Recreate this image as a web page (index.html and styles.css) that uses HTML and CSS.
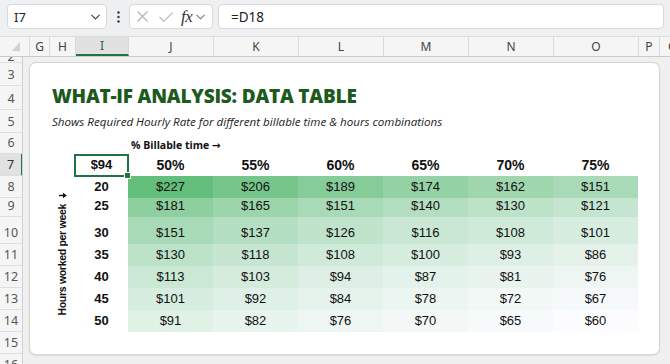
FILE: index.html
```html
<!DOCTYPE html>
<html>
<head>
<meta charset="utf-8">
<link rel="stylesheet" href="styles.css">
</head>
<body>
<div class="app">
  <div class="toolbar">
    <div class="namebox">
      <span class="nb-text">I7</span>
      <svg class="chev" width="9" height="6" viewBox="0 0 9 6"><polyline points="0.5,0.8 4.5,4.8 8.5,0.8" fill="none" stroke="#444" stroke-width="1.2"/></svg>
    </div>
    <div class="kebab">
      <svg width="3" height="12" viewBox="0 0 3 12"><circle cx="1.5" cy="1.5" r="1.2" fill="#333"/><circle cx="1.5" cy="6" r="1.2" fill="#333"/><circle cx="1.5" cy="10.5" r="1.2" fill="#333"/></svg>
    </div>
    <div class="fxbox">
      <svg class="ico-x" width="11" height="11" viewBox="0 0 11 11"><path d="M0.5 0.5 L10.5 10.5 M10.5 0.5 L0.5 10.5" stroke="#b3b3b3" stroke-width="1.1" fill="none"/></svg>
      <svg class="ico-ok" width="14" height="10" viewBox="0 0 14 10"><polyline points="0.5,5 4.8,9.3 13.5,0.6" fill="none" stroke="#b3b3b3" stroke-width="1.1"/></svg>
      <span class="fx">fx</span>
      <svg class="chev2" width="9" height="6" viewBox="0 0 9 6"><polyline points="0.5,0.8 4.5,4.8 8.5,0.8" fill="none" stroke="#777" stroke-width="1.1"/></svg>
    </div>
    <div class="formula">=D18</div>
  </div>

  <div class="colheads">
    <div class="corner"><svg width="8" height="9" viewBox="0 0 8 9"><polygon points="8,0 8,9 0,9" fill="#d0d0d0"/></svg></div>
    <div class="ch c-g">G</div>
    <div class="ch c-h">H</div>
    <div class="ch c-i sel">I</div>
    <div class="ch c-w">J</div>
    <div class="ch c-w">K</div>
    <div class="ch c-w">L</div>
    <div class="ch c-w">M</div>
    <div class="ch c-w">N</div>
    <div class="ch c-w">O</div>
    <div class="ch c-p">P</div>
    <div class="ch c-q">Q</div>
  </div>

  <div class="main">
    <div class="rowheads">
      <div class="rh h-part">2</div>
      <div class="rh h23">3</div>
      <div class="rh h24">4</div>
      <div class="rh h23">5</div>
      <div class="rh h21">6</div>
      <div class="rh h22 sel">7</div>
      <div class="rh h22">8</div>
      <div class="rh h19">9</div>
      <div class="rh h27">10</div>
      <div class="rh h22">11</div>
      <div class="rh h22">12</div>
      <div class="rh h22">13</div>
      <div class="rh h22">14</div>
      <div class="rh h22">15</div>
      <div class="rh h22">16</div>
    </div>
    <div class="sheet">
      <div class="card">
        <div class="row h23"></div>
        <div class="row h24 title-row"><h1 class="title">WHAT-IF ANALYSIS: DATA TABLE</h1></div>
        <div class="row h23 sub-row"><p class="subtitle">Shows Required Hourly Rate for different billable time &amp; hours combinations</p></div>
        <div class="row h21 bill-row"><span class="billable">% Billable time <span class="arr">→</span></span></div>
        <div class="block">
          <div class="spacer"></div>
          <div class="vcol">
            <svg class="varr" width="8" height="7" viewBox="0 0 8 7"><path d="M0 3.5 H5.5" stroke="#111" stroke-width="1.4"/><polygon points="4,0.8 7.8,3.5 4,6.2" fill="#111"/></svg>
            <span class="vlabel">Hours worked per week</span>
          </div>
          <div class="table">
            <div class="cell corner-cell h22"><span>$94</span></div>
            <div class="cell hdr">50%</div>
            <div class="cell hdr">55%</div>
            <div class="cell hdr">60%</div>
            <div class="cell hdr">65%</div>
            <div class="cell hdr">70%</div>
            <div class="cell hdr">75%</div>

            <div class="cell hrs">20</div>
            <div class="cell val" style="background:rgb(99,190,123)">$227</div>
            <div class="cell val" style="background:rgb(118,198,140)">$206</div>
            <div class="cell val" style="background:rgb(134,204,153)">$189</div>
            <div class="cell val" style="background:rgb(148,210,165)">$174</div>
            <div class="cell val" style="background:rgb(159,214,174)">$162</div>
            <div class="cell val" style="background:rgb(169,218,183)">$151</div>

            <div class="cell hrs">25</div>
            <div class="cell val" style="background:rgb(141,207,159)">$181</div>
            <div class="cell val" style="background:rgb(156,213,172)">$165</div>
            <div class="cell val" style="background:rgb(169,218,183)">$151</div>
            <div class="cell val" style="background:rgb(179,222,192)">$140</div>
            <div class="cell val" style="background:rgb(188,226,200)">$130</div>
            <div class="cell val" style="background:rgb(196,229,207)">$121</div>

            <div class="cell hrs">30</div>
            <div class="cell val" style="background:rgb(169,218,183)">$151</div>
            <div class="cell val" style="background:rgb(181,223,194)">$137</div>
            <div class="cell val" style="background:rgb(192,228,203)">$126</div>
            <div class="cell val" style="background:rgb(201,231,211)">$116</div>
            <div class="cell val" style="background:rgb(208,234,217)">$108</div>
            <div class="cell val" style="background:rgb(214,237,223)">$101</div>

            <div class="cell hrs">35</div>
            <div class="cell val" style="background:rgb(188,226,200)">$130</div>
            <div class="cell val" style="background:rgb(199,230,209)">$118</div>
            <div class="cell val" style="background:rgb(208,234,217)">$108</div>
            <div class="cell val" style="background:rgb(215,237,223)">$100</div>
            <div class="cell val" style="background:rgb(222,240,229)">$93</div>
            <div class="cell val" style="background:rgb(228,242,234)">$86</div>

            <div class="cell hrs">40</div>
            <div class="cell val" style="background:rgb(203,232,213)">$113</div>
            <div class="cell val" style="background:rgb(213,236,221)">$103</div>
            <div class="cell val" style="background:rgb(221,239,228)">$94</div>
            <div class="cell val" style="background:rgb(227,242,234)">$87</div>
            <div class="cell val" style="background:rgb(233,244,238)">$81</div>
            <div class="cell val" style="background:rgb(237,246,242)">$76</div>

            <div class="cell hrs">45</div>
            <div class="cell val" style="background:rgb(214,237,223)">$101</div>
            <div class="cell val" style="background:rgb(223,240,230)">$92</div>
            <div class="cell val" style="background:rgb(230,243,236)">$84</div>
            <div class="cell val" style="background:rgb(235,245,241)">$78</div>
            <div class="cell val" style="background:rgb(241,248,245)">$72</div>
            <div class="cell val" style="background:rgb(246,249,249)">$67</div>

            <div class="cell hrs">50</div>
            <div class="cell val" style="background:rgb(224,241,230)">$91</div>
            <div class="cell val" style="background:rgb(232,244,238)">$82</div>
            <div class="cell val" style="background:rgb(237,246,242)">$76</div>
            <div class="cell val" style="background:rgb(243,248,247)">$70</div>
            <div class="cell val" style="background:rgb(247,250,251)">$65</div>
            <div class="cell val" style="background:rgb(252,252,255)">$60</div>
          </div>
        </div>
        <div class="row h22"></div>
      </div>
    </div>
  </div>
</div>
</body>
</html>
```

FILE: styles.css
```css
* { box-sizing: border-box; margin: 0; padding: 0; }
html, body { width: 670px; height: 364px; overflow: hidden; background: #f0f0f0; }
body { font-family: "Noto Sans", "Open Sans", sans-serif; color: #222; }

.app { width: 670px; height: 364px; overflow: hidden; display: flex; flex-direction: column; }

/* toolbar */
.toolbar { height: 36px; flex: none; background: #eff0f2; display: flex; align-items: flex-start; padding: 4px 0 0 7px; }
.namebox { width: 100px; height: 25px; background: #fff; border: 1px solid #d9d9d9; border-radius: 4px; display: flex; align-items: center; justify-content: space-between; padding: 0 6px 0 6px; }
.nb-text { font-size: 13px; color: #222; }
.kebab { width: 22px; height: 25px; display: flex; align-items: center; justify-content: center; }
.fxbox { width: 84px; height: 25px; background: #fff; border: 1px solid #d9d9d9; border-radius: 4px; display: flex; align-items: center; padding: 0 0 0 7px; margin-right: 5px; }
.ico-x { margin-right: 11px; }
.ico-ok { margin-right: 8px; }
.fx { font-family: "Liberation Serif", "DejaVu Serif", serif; font-style: italic; font-size: 17px; line-height: 20px; color: #333; margin-right: 3px; letter-spacing: -0.5px; }
.chev2 { margin-left: 1px; }
.formula { width: 446px; height: 25px; background: #fff; border: 1px solid #d9d9d9; border-radius: 4px; font-size: 13.5px; color: #222; display: flex; align-items: center; padding-left: 12px; }

/* column headers */
.colheads { height: 21px; flex: none; display: flex; background: #f5f5f5; border-top: 1px solid #dcdcdc; border-bottom: 1px solid #c9c9c9; overflow: hidden; }
.corner { width: 30px; flex: none; display: flex; align-items: flex-end; justify-content: flex-end; padding: 0 9px 5px 0; border-right: 1px solid #dadada; }
.ch { flex: none; display: flex; align-items: center; justify-content: center; font-size: 12px; color: #444; border-right: 1px solid #dadada; }
.c-g { width: 20px; }
.c-h { width: 26px; }
.c-i { width: 53px; }
.c-w { width: 85px; }
.c-p { width: 21px; }
.c-q { width: 20px; border-right: none; justify-content: flex-start; padding-left: 8px; }
.ch.sel { background: #e1e1e1; color: #1d6b3c; border-bottom: 2px solid #217346; }

/* main */
.main { flex: 1; display: flex; overflow: hidden; }
.rowheads { width: 23px; flex: none; background: #f5f5f5; border-right: 1px solid #d0d0d0; display: flex; flex-direction: column; overflow: hidden; }
.rh { flex: none; display: flex; align-items: flex-end; justify-content: center; font-size: 12.5px; color: #555; line-height: 21px; border-bottom: 1px solid #dedede; overflow: hidden; }
.rh.sel { background: #e1e1e1; border-right: 2px solid #217346; margin-right: -1px; color: #333; }
.h-part { height: 6px; line-height: 10px; }
.h19 { height: 19px; }
.h21 { height: 21px; }
.h22 { height: 22px; }
.h23 { height: 23px; }
.h24 { height: 24px; }
.h27 { height: 27px; }

.sheet { flex: 1; padding: 6px 0 0 7px; background: #f0f0f0; overflow: hidden; }
.card { width: 629px; background: #fff; border-radius: 6px; box-shadow: 0 0 0 1px #d6d6d6, 0 1px 3px rgba(0,0,0,0.18); display: flex; flex-direction: column; }

.row { flex: none; display: flex; align-items: flex-end; padding-left: 22px; }
.title { font-family: "Open Sans", "Noto Sans", sans-serif; font-weight: 800; font-size: 19px; line-height: 26px; color: #1d5a1e; letter-spacing: -0.2px; margin-bottom: 1px; }
.subtitle { font-family: "Open Sans", "Noto Sans", sans-serif; font-style: italic; font-size: 11.6px; line-height: 18px; color: #222; margin-bottom: 2px; }
.bill-row { padding-left: 101px; }
.billable { font-family: "Open Sans", "Noto Sans", sans-serif; font-weight: 700; font-size: 10.5px; line-height: 16px; color: #111; margin-bottom: 1px; }
.arr { font-family: "DejaVu Sans", sans-serif; font-size: 10.5px; font-weight: 700; }

.block { display: flex; }
.spacer { width: 19px; flex: none; }
.vcol { width: 26px; flex: none; padding-top: 22px; display: flex; flex-direction: column; align-items: center; justify-content: center; gap: 5px; }
.varr { flex: none; margin-left: 1px; }
.vlabel { writing-mode: vertical-rl; transform: rotate(180deg); font-family: "Liberation Sans", Arial, sans-serif; font-weight: 700; font-size: 10.5px; letter-spacing: -0.3px; color: #111; }

.table { display: grid; grid-template-columns: 53px repeat(6, 85px); grid-template-rows: 22px 22px 19px 27px 22px 22px 22px 22px; }
.cell { display: flex; align-items: flex-end; justify-content: center; font-family: "Liberation Sans", Arial, sans-serif; font-size: 13px; line-height: 22px; color: #111; }
.hdr { font-weight: 700; font-size: 14px; line-height: 21px; }
.hrs { font-weight: 700; }
.corner-cell { position: relative; font-weight: 700; }
.corner-cell::before { content: ""; position: absolute; left: -1px; top: 0; right: -1px; bottom: -1px; border: 2px solid #217346; }
.corner-cell::after { content: ""; position: absolute; right: -3px; bottom: -3px; width: 5px; height: 5px; background: #217346; border: 1px solid #fff; }
```
